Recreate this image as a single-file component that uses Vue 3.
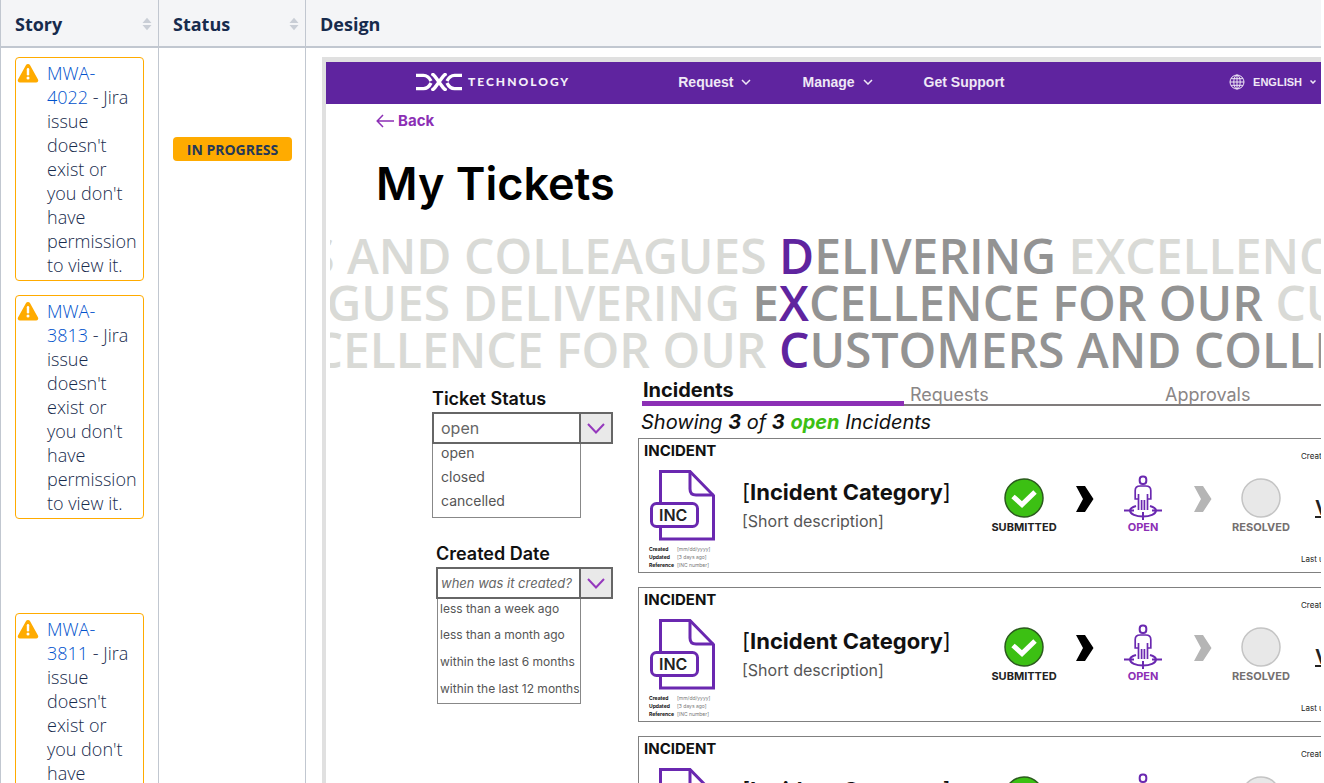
<script setup>
import { ref } from 'vue'

const stories = ref([
  { prefix: 'MWA-', number: '4022' },
  { prefix: 'MWA-', number: '3813' },
  { prefix: 'MWA-', number: '3811', apart: true }
])

const bannerLines = [
  { left: 'CUSTOMERS AND COLLEAGUES ', edge: '', accent: 'D', strong: 'ELIVERING', tail: ' EXCELLENCE FOR OUR' },
  { left: 'COLLEAGUES DELIVERING ', edge: 'E', accent: 'X', strong: 'CELLENCE FOR OUR', tail: ' CUSTOMERS' },
  { left: 'EXCELLENCE FOR OUR ', edge: '', accent: 'C', strong: 'USTOMERS AND COLLEAGUES', tail: '' }
]

const statusOptions = ['open', 'closed', 'cancelled']
const dateOptions = ['less than a week ago', 'less than a month ago', 'within the last 6 months', 'within the last 12 months']
const incidents = [1, 2, 3]
</script>

<template>
  <main class="page">
    <table class="stories">
      <colgroup>
        <col class="col-story" />
        <col class="col-status" />
        <col />
      </colgroup>
      <thead>
        <tr>
          <th scope="col">
            <div class="head">Story
              <svg class="sort" viewBox="0 0 10 14" width="10" height="14"><path d="M0.5 6 5 0.8 9.500 6zM0.500 8 5 13.200 9.500 8z" /></svg>
            </div>
          </th>
          <th scope="col">
            <div class="head">Status
              <svg class="sort" viewBox="0 0 10 14" width="10" height="14"><path d="M0.500 6 5 0.800 9.500 6zM0.500 8 5 13.200 9.500 8z" /></svg>
            </div>
          </th>
          <th scope="col"><div class="head">Design</div></th>
        </tr>
      </thead>
      <tbody>
        <tr>
          <td class="story-cell">
            <div v-for="s in stories" :key="s.number" class="issue" :class="{ apart: s.apart }">
              <svg class="warn" viewBox="0 0 22 19" width="22" height="19">
                <path d="M8.900 1.300a2.400 2.400 0 0 1 4.200 0l7.900 14.200c.8 1.500-.2 3-1.900 3H2.900c-1.700 0-2.700-1.500-1.900-3z" fill="#ffab00" />
                <path d="M11 5.200v5" stroke="#fff" stroke-width="2.400" stroke-linecap="round" />
                <circle cx="11" cy="14" r="1.500" fill="#fff" />
              </svg>
              <p><a href="#">{{ s.prefix }}<br />{{ s.number }}</a> - Jira issue doesn't exist or you don't have permission to view it.</p>
            </div>
          </td>
          <td class="status-cell"><span class="lozenge">IN PROGRESS</span></td>
          <td class="design-cell">
            <div class="mock">
              <nav class="nav">
                <a class="brand" href="#">
                  <svg viewBox="0 0 46 18" width="46" height="18" fill="none">
                    <path d="M0 2.400h7.500c4 0 6 2.600 7.500 5.600M0 15.600h7.500c4 0 6-2.600 7.500-5.600" />
                    <path d="M15.500 .5C19 2 20.500 6 23 9s4 7 7.500 8.500M30.500 .5C27 2 25.500 6 23 9s-4 7-7.500 8.500" />
                    <path d="M46 2.400h-7.500c-4 0-6 2.600-7.500 5.600M46 15.600h-7.500c-4 0-6-2.600-7.500-5.600" />
                  </svg>
                  <span>TECHNOLOGY</span>
                </a>
                <button type="button">Request
                  <svg viewBox="0 0 10 6" width="10" height="6"><path d="M1 1l4 4 4-4" /></svg>
                </button>
                <button type="button">Manage
                  <svg viewBox="0 0 10 6" width="10" height="6"><path d="M1 1l4 4 4-4" /></svg>
                </button>
                <a class="support" href="#">Get Support</a>
                <button type="button" class="lang">
                  <svg viewBox="0 0 16 16" width="16" height="16" class="globe">
                    <circle cx="8" cy="8" r="7" /><ellipse cx="8" cy="8" rx="3.200" ry="7" /><path d="M8 1v14M1 8h14M2 4.700h12M2 11.300h12" />
                  </svg>
                  <span>ENGLISH</span>
                  <svg viewBox="0 0 6 4" width="6" height="4"><path d="M.5.5 3 3 5.500.500" /></svg>
                </button>
              </nav>

              <div class="intro">
                <a class="back" href="#">
                  <svg viewBox="0 0 18 14" width="18" height="14"><path d="M18 7H1.500M7 1 1.200 7 7 13" /></svg>Back
                </a>
                <h1>My Tickets</h1>
              </div>

              <div class="banner">
                <div v-for="line in bannerLines" :key="line.accent" class="banner-line">
                  <span class="lead">{{ line.left }}<b>{{ line.edge }}</b></span>
                  <span class="rest"><i>{{ line.accent }}</i><b>{{ line.strong }}</b>{{ line.tail }}</span>
                </div>
              </div>

              <div class="body">
                <form class="filters" @submit.prevent>
                  <div class="filter">
                    <label for="ticket-status">Ticket Status</label>
                    <div class="combo">
                      <select id="ticket-status"><option>open</option></select>
                      <span class="arrow"><svg viewBox="0 0 18 11" width="18" height="11"><path d="M1 1l8 8.500L17 1" /></svg></span>
                    </div>
                    <ul class="options">
                      <li v-for="o in statusOptions" :key="o">{{ o }}</li>
                    </ul>
                  </div>
                  <div class="filter date">
                    <label for="created-date">Created Date</label>
                    <div class="combo">
                      <select id="created-date"><option>when was it created?</option></select>
                      <span class="arrow"><svg viewBox="0 0 18 11" width="18" height="11"><path d="M1 1l8 8.500L17 1" /></svg></span>
                    </div>
                    <ul class="options">
                      <li v-for="o in dateOptions" :key="o">{{ o }}</li>
                    </ul>
                  </div>
                </form>

                <section class="results">
                  <div class="tabs">
                    <button type="button" class="active">Incidents</button>
                    <button type="button">Requests</button>
                    <button type="button">Approvals</button>
                  </div>
                  <p class="summary">Showing <b>3</b> of <b>3</b> <b class="green">open</b> Incidents</p>

                  <article v-for="n in incidents" :key="n" class="card">
                    <div class="kind">
                      <h3>INCIDENT</h3>
                      <svg class="doc" viewBox="0 0 66 72" width="66" height="72" fill="none" stroke="#6a28b0" stroke-width="3">
                        <path d="M10.500 34V2.500H40L63.500 26.500V70H10.500V58" />
                        <path d="M40 2.500V20q0 6 6 6h17.500" />
                        <rect x="1.500" y="34.500" width="46" height="23" rx="5" fill="#fff" />
                        <text x="9" y="51.500">INC</text>
                      </svg>
                      <dl>
                        <dt>Created</dt><dd>[mm/dd/yyyy]</dd>
                        <dt>Updated</dt><dd>[3 days ago]</dd>
                        <dt>Reference</dt><dd>[INC number]</dd>
                      </dl>
                    </div>
                    <div class="about">
                      <h2><span>[</span>Incident Category<span>]</span></h2>
                      <p>[Short description]</p>
                    </div>
                    <div class="steps">
                      <div class="step">
                        <svg viewBox="0 0 46 46" width="46" height="46">
                          <circle cx="23" cy="24" r="19" fill="#3cc013" stroke="#2b5a1d" stroke-width="1.500" />
                          <path d="M12 22.500l9 8L34 18" fill="none" stroke="#fff" stroke-width="5" />
                        </svg>
                        <span>SUBMITTED</span>
                      </div>
                      <svg class="next" viewBox="0 0 18 28" width="18" height="28"><path d="M0 1h9l8.500 13L9 27H0l7-13z" /></svg>
                      <div class="step open">
                        <svg viewBox="0 0 38 46" width="38" height="46" fill="none" stroke="#6a28b0" stroke-width="2">
                          <rect x="15.700" y="2.500" width="6.600" height="7.500" rx="3" />
                          <path d="M14.500 20v16M14.500 25h-3.300v-8.500q0-4.500 5-4.500h5.600q5 0 5 4.500V25h-3.300M23.500 20v16M17.600 36V26M20.400 36V26" stroke-width="1.700" />
                          <path d="M12 32C8.500 33 6 34.500 6 36.500 6 40 12 42.500 19 42.500S32 40 32 36.500C32 34.500 29.500 33 26 32M0 36.500h10M28 36.500h10M19 38v8" />
                        </svg>
                        <span>OPEN</span>
                      </div>
                      <svg class="next muted" viewBox="0 0 18 28" width="18" height="28"><path d="M0 1h9l8.500 13L9 27H0l7-13z" /></svg>
                      <div class="step resolved">
                        <svg viewBox="0 0 46 46" width="46" height="46">
                          <circle cx="23" cy="24" r="19" fill="#e8e8e8" stroke="#c4c4c4" stroke-width="1.500" />
                        </svg>
                        <span>RESOLVED</span>
                      </div>
                    </div>
                    <div class="side">
                      <span>Created</span>
                      <a href="#">View</a>
                      <span>Last updated</span>
                    </div>
                  </article>
                </section>
              </div>
            </div>
          </td>
        </tr>
      </tbody>
    </table>
  </main>
</template>

<style>
body {
  margin: 0;
  background: #fff;
}
</style>

<style scoped>
* {
  box-sizing: border-box;
}
.page {
  height: 100vh;
  overflow: hidden;
  padding-right: 3px;
  font-family: "Open Sans", "Noto Sans", sans-serif;
  color: #172b4d;
}
a {
  text-decoration: none;
}
button {
  border: 0;
  padding: 0;
  background: none;
  font: inherit;
  color: inherit;
  cursor: pointer;
}
.stories {
  width: 100%;
  table-layout: fixed;
  border-collapse: separate;
  border-spacing: 0;
}
.col-story {
  width: 158px;
}
.col-status {
  width: 147px;
}
th {
  padding: 0 0 0 14px;
  background: #f4f5f7;
  border-left: 1px solid #c1c7d0;
  border-bottom: 2px solid #c1c7d0;
  text-align: left;
  font-size: 18px;
  font-weight: 700;
}
.head {
  display: flex;
  align-items: center;
  justify-content: space-between;
  height: 46px;
  padding: 2px 6px 0 0;
}
.sort {
  fill: #c9ced6;
}
td {
  padding: 9px 13px 0 14px;
  border-left: 1px solid #c1c7d0;
  vertical-align: top;
}
.story-cell {
  padding-right: 14px;
}
.issue {
  display: flex;
  gap: 8px;
  margin-bottom: 14px;
  padding: 3px 5px 3px 1px;
  border: 1px solid #ffab00;
  border-radius: 4px;
}
.issue.apart {
  margin-top: 94px;
}
.warn {
  flex: none;
  margin-top: 3px;
}
.issue p {
  flex: 1;
  min-width: 0;
  margin: 0;
  font-size: 18px;
  font-weight: 350;
  line-height: 24px;
}
.issue a {
  color: #0052cc;
}
.lozenge {
  display: block;
  margin-top: 80px;
  padding-top: 2px;
  border-radius: 4px;
  background: #ffab00;
  color: #253858;
  font-size: 14px;
  font-weight: 700;
  line-height: 22px;
  text-align: center;
}
.design-cell {
  padding: 9px 0 0 16px;
}
.mock {
  height: 760px;
  overflow: hidden;
  border-top: 5px solid #e0e0e0;
  border-left: 4px solid #e0e0e0;
  background: #fff;
  font-family: Inter, "Open Sans", sans-serif;
  color: #111;
}
.nav {
  display: flex;
  align-items: center;
  height: 42px;
  padding: 0 5px 3px 90px;
  background: #5f249f;
  color: #efe8f6;
  font-family: "Liberation Sans", Arial, sans-serif;
  font-size: 14px;
  font-weight: 700;
}
.nav a,
.nav button {
  display: flex;
  align-items: center;
  color: inherit;
}
.nav button {
  gap: 8px;
  margin-right: 51px;
}
.nav svg {
  fill: none;
  stroke: currentColor;
  stroke-width: 1.5;
}
.nav .brand {
  gap: 6px;
  margin-right: 108px;
  color: #f4effa;
  font-family: Lato, sans-serif;
  font-size: 12px;
  font-weight: 900;
  letter-spacing: 2px;
}
.nav .brand svg {
  stroke: #fff;
  stroke-width: 3.4;
}
.nav .lang {
  margin: 0 0 0 auto;
  font-size: 11px;
}
.nav .globe {
  stroke-width: 1;
}
.intro {
  padding: 7px 0 0 50px;
}
.back {
  display: flex;
  align-items: center;
  gap: 4px;
  color: #8c2fb5;
  font-size: 15px;
  font-weight: 700;
  line-height: 20px;
}
.back svg {
  fill: none;
  stroke: currentColor;
  stroke-width: 1.5;
}
h1 {
  margin: 25px 0 20px;
  color: #000;
  font-size: 45px;
  font-weight: 600;
  line-height: 56px;
}
.banner {
  margin-left: 4px;
  font-family: "Open Sans", "Noto Sans", sans-serif;
  font-size: 48px;
  font-weight: 600;
  line-height: 47px;
  color: #d9dad6;
  white-space: pre;
}
.banner-line {
  display: grid;
  grid-template-columns: 449px 1fr;
  height: 47px;
}
.lead {
  display: flex;
  justify-content: flex-end;
  overflow: hidden;
}
.rest {
  overflow: hidden;
}
.banner b {
  color: #939393;
  font-weight: inherit;
}
.banner i {
  color: #5f249f;
  font-style: normal;
}
.body {
  display: grid;
  grid-template-columns: 181px minmax(0, 1fr);
  column-gap: 25px;
  padding-left: 106px;
}
.filters {
  padding-top: 16px;
}
.filter {
  margin-bottom: 26px;
}
.filter label {
  display: block;
  margin-bottom: 3px;
  font-size: 18px;
  font-weight: 600;
  line-height: 20px;
}
.filter.date {
  padding-left: 4px;
}
.combo {
  display: flex;
  height: 32px;
  border: 2px solid #666;
}
.combo select {
  flex: 1;
  min-width: 0;
  appearance: none;
  border: 0;
  border-radius: 0;
  padding: 0 0 0 7px;
  background: #fff;
  color: #666;
  font: 16px Inter, sans-serif;
}
.combo .arrow {
  display: flex;
  align-items: center;
  justify-content: center;
  width: 32px;
  border-left: 2px solid #666;
  background: #e9e9e9;
}
.arrow svg {
  fill: none;
  stroke: #9539bd;
  stroke-width: 2;
}
.options {
  width: 149px;
  margin: 0;
  padding: 0 0 4px 8px;
  border: 1px solid #888;
  border-top: 0;
  list-style: none;
  color: #555;
  font-size: 14px;
  line-height: 24px;
  white-space: nowrap;
}
.options li:first-child {
  margin-bottom: 3px;
  line-height: 18px;
}
.date .combo select {
  padding-left: 3px;
  font-size: 13px;
  font-style: italic;
}
.date .options {
  width: 144px;
  margin-left: 1px;
  padding: 1px 0 1px 2px;
  font-size: 12px;
  line-height: 27px;
}
.results {
  padding-top: 5px;
}
.tabs {
  display: grid;
  grid-template-columns: 262px 255px 1fr;
  height: 28px;
  margin-left: 4px;
  border-bottom: 2px solid #807c7c;
}
.tabs button {
  padding: 6px 0 0 6px;
  color: #8a8686;
  font-size: 18px;
  line-height: 20px;
  text-align: left;
}
.tabs .active {
  height: 28px;
  padding: 0 0 0 1px;
  border-bottom: 5px solid #8c2fb5;
  color: #111;
  font-size: 20px;
  font-weight: 700;
}
.summary {
  margin: 4px 0;
  padding-left: 3px;
  font-size: 20px;
  font-style: italic;
  line-height: 24px;
}
.green {
  color: #3cc013;
}
.card {
  display: grid;
  grid-template-columns: 103px 249px 310px minmax(0, 1fr);
  height: 135px;
  margin-bottom: 14px;
  border: 1px solid #808080;
  border-right: 0;
  overflow: hidden;
}
.kind {
  padding: 2px 0 0 5px;
}
h3 {
  margin: 0 0 8px;
  font-size: 15px;
  font-weight: 700;
  line-height: 20px;
}
.doc {
  display: block;
  margin-left: 6px;
}
.doc text {
  fill: #222;
  stroke: none;
  font-size: 16px;
  font-weight: 600;
}
dl {
  display: grid;
  grid-template-columns: 28px 1fr;
  margin: 4px 0 0 5px;
  font-size: 5px;
  line-height: 8px;
}
dt {
  font-weight: 700;
}
dd {
  margin: 0;
  color: #777;
}
.about {
  padding-top: 39px;
}
.about h2 {
  margin: 0 0 5px;
  font-size: 22px;
  font-weight: 700;
  line-height: 28px;
  white-space: nowrap;
}
.about h2 span {
  font-weight: 400;
}
.about p {
  margin: 0;
  color: #555;
  font-size: 16px;
  line-height: 20px;
}
.steps {
  display: flex;
  align-items: flex-start;
  padding-top: 35px;
}
.step {
  display: flex;
  flex-direction: column;
  align-items: center;
  width: 66px;
  color: #222;
  font-size: 11px;
  font-weight: 700;
  line-height: 14px;
}
.step.open {
  width: 40px;
  color: #8c2fb5;
}
.step.resolved {
  color: #757070;
}
.next {
  flex: none;
  margin: 11px 29px 0 19px;
}
.next.muted {
  margin: 11px 16px 0 31px;
  fill: #b5b5b5;
}
.side {
  display: flex;
  flex-direction: column;
  justify-content: space-between;
  padding: 11px 0 7px;
  color: #222;
  font-size: 8px;
  line-height: 12px;
  white-space: nowrap;
}
.side a {
  margin-left: 14px;
  color: #222;
  font-size: 20px;
  font-weight: 600;
  line-height: 24px;
  text-decoration: underline;
}
</style>
